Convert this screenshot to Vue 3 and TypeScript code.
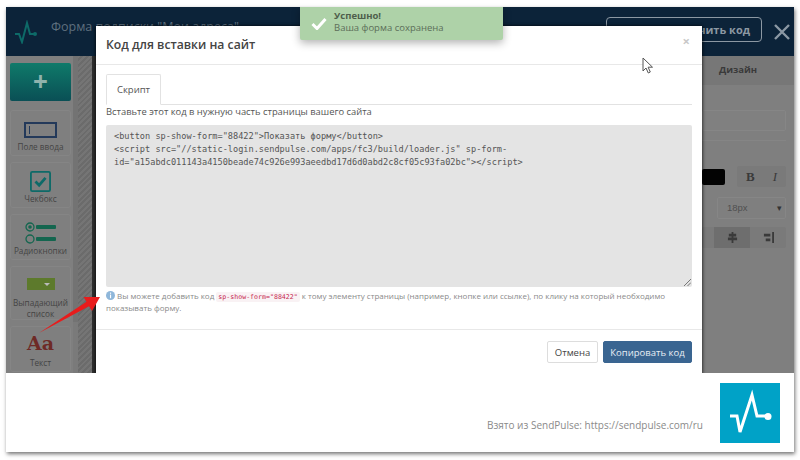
<script setup lang="ts">
const code = `<button sp-show-form="88422">Показать форму</button>
<script src="//static-login.sendpulse.com/apps/fc3/build/loader.js" sp-form-
id="a15abdc011143a4150beade74c926e993aeedbd17d6d0abd2c8cf05c93fa02bc"><\/script>`
const snippet = 'sp-show-form="88422"'
</script>

<template>
  <div class="page">
    <div class="frame">
      <div class="app">
        <header class="topbar">
          <svg class="bar-logo" width="24" height="24" viewBox="0 0 24 24" fill="none">
            <path d="M1 14h4l3 8 5-19 3 11h5" stroke="#0e6a68" stroke-width="2" />
            <circle cx="21" cy="14" r="2" fill="#0e6a68" />
          </svg>
          <span class="bar-title">Форма подписки "Мои адреса"</span>
          <span class="bar-spacer"></span>
          <span class="bar-btn">Получить код</span>
          <svg class="bar-x" width="16" height="16" viewBox="0 0 16 16">
            <path d="M1 1l14 14M15 1L1 15" stroke="#8c98a3" stroke-width="2.4" />
          </svg>
        </header>
        <div class="workspace">
          <aside class="sidebar">
            <div class="add">+</div>
            <div class="tool tool-a">
              <span class="input-ico"><i></i></span>
              <span>Поле ввода</span>
            </div>
            <div class="tool tool-a tight">
              <svg width="21" height="21" viewBox="0 0 23 23" fill="none">
                <rect x="1" y="1" width="21" height="21" rx="1.5" stroke="#0e6a68" stroke-width="2" />
                <path d="M6 11.5l4 4 7-8" stroke="#0e6a68" stroke-width="3" />
              </svg>
              <span>Чекбокс</span>
            </div>
            <div class="tool tool-a tight">
              <svg width="32" height="22" viewBox="0 0 32 22" fill="none">
                <circle cx="5" cy="5" r="4" stroke="#14664f" stroke-width="1.3" />
                <circle cx="5" cy="5" r="1.8" fill="#14664f" />
                <circle cx="5" cy="17" r="4" stroke="#14664f" stroke-width="1.3" />
                <rect x="11" y="3" width="20" height="4" rx="1" fill="#14664f" />
                <rect x="11" y="15" width="20" height="4" rx="1" fill="#14664f" />
              </svg>
              <span>Радиокнопки</span>
            </div>
            <div class="tool tool-b">
              <span class="select-ico"><i></i></span>
              <span class="two-line">Выпадающий<br />список</span>
            </div>
            <div class="tool tool-a">
              <span class="aa">Aa</span>
              <span>Текст</span>
            </div>
          </aside>
          <div class="scroll"><i></i></div>
          <div class="hatch"></div>
          <div class="dark"></div>
          <div class="center"></div>
          <section class="panel">
            <div class="panel-tab">Дизайн</div>
            <div class="panel-body">
              <div class="panel-input"></div>
              <div class="panel-line"></div>
              <div class="panel-row">
                <span class="swatch"></span>
                <span class="bi"><b>B</b><em>I</em></span>
              </div>
              <div class="panel-select"><span>18px</span><small>▾</small></div>
              <div class="panel-align">
                <span class="cell active">
                  <svg width="11" height="11" viewBox="0 0 12 12" fill="#3a3a3a">
                    <path d="M5 0h2v2h3v3H7v1h4v3H7v3H5V9H1V6h4V5H2V2h3z" />
                  </svg>
                </span>
                <span class="cell">
                  <svg width="11" height="11" viewBox="0 0 12 12" fill="#3a3a3a">
                    <path d="M10 0h2v12h-2zM1 2h7v3H1zM3 7h5v3H3z" />
                  </svg>
                </span>
              </div>
            </div>
          </section>
        </div>

        <div class="modal">
          <div class="modal-head">
            <h2>Код для вставки на сайт</h2>
            <span class="close">×</span>
          </div>
          <div class="modal-body">
            <div class="tabs"><span class="tab">Скрипт</span></div>
            <p class="lead">Вставьте этот код в нужную часть страницы вашего сайта</p>
            <div class="code-wrap">
              <pre class="code">{{ code }}</pre>
              <svg class="grip" width="8" height="8" viewBox="0 0 8 8">
                <path d="M1 8l7-7M4.5 8L8 4.5" stroke="#777" stroke-width="1" />
              </svg>
            </div>
            <p class="help">
              <svg class="info" width="9" height="9" viewBox="0 0 9 9">
                <circle cx="4.5" cy="4.5" r="4.5" fill="#8fb7da" />
                <rect x="4" y="1.6" width="1.1" height="1.2" fill="#fff" />
                <rect x="4" y="3.6" width="1.1" height="3.6" fill="#fff" />
              </svg>
              Вы можете добавить код <code>{{ snippet }}</code> к тому элементу страницы (например, кнопке или ссылке), по клику на который необходимо показывать форму.
            </p>
          </div>
          <div class="modal-foot">
            <button class="btn btn-cancel" type="button">Отмена</button>
            <button class="btn btn-copy" type="button">Копировать код</button>
          </div>
        </div>

        <div class="toast">
          <svg width="16" height="13" viewBox="0 0 16 13" fill="none">
            <path d="M1.5 7l4.5 4.5L14.5 2" stroke="#fff" stroke-width="3" />
          </svg>
          <div class="toast-text">
            <strong>Успешно!</strong>
            <span>Ваша форма сохранена</span>
          </div>
        </div>

        <svg class="arrow" width="64" height="40" viewBox="0 0 64 40">
          <path d="M0 38L47.500 6.800 44.500 2 61 2 53 16 50 11.200Z" fill="#e81c1c" />
        </svg>
        <svg class="cursor" width="12" height="17" viewBox="0 0 12 17">
          <path d="M1 1v13l3-3 2.300 5 2-1-2.200-4.800H10.500z" fill="#fff" stroke="#555" stroke-width="1" />
        </svg>
      </div>
      <footer class="credit">
        <span>Взято из SendPulse: https://sendpulse.com/ru</span>
        <div class="logo">
          <svg width="60" height="60" viewBox="0 0 60 60" fill="none">
            <path d="M10 33h7l3 16 12-37 5 21h11" stroke="#fff" stroke-width="3" />
            <circle cx="48" cy="33.500" r="3.500" fill="#fff" />
          </svg>
        </div>
      </footer>
    </div>
  </div>
</template>

<style scoped>
.page {
  width: 800px;
  height: 460px;
  box-sizing: border-box;
  padding: 7px 6px 8px;
  background: #fff;
  overflow: hidden;
  font-family: "Open Sans", "Noto Sans", sans-serif;
}
.frame {
  height: 445px;
  display: flex;
  flex-direction: column;
  background: #fff;
  box-shadow: 1px 2px 4px rgba(0, 0, 0, 0.55);
}
.app {
  position: relative;
  height: 366px;
  flex: none;
  overflow: hidden;
  background: #7f7f7f;
}
.topbar {
  height: 49px;
  display: flex;
  align-items: center;
  background: #0c2339;
  padding-right: 4px;
}
.bar-logo { margin-left: 8px; flex: none; }
.bar-title { margin: 0 0 10px 13px; font-size: 12.500px; color: #5e6f7e; }
.bar-spacer { flex: 1; }
.bar-btn {
  width: 156px;
  height: 25px;
  box-sizing: border-box;
  border: 1px solid #8c98a3;
  border-radius: 4px;
  margin: 0 12px 4px 0;
  padding-right: 11px;
  text-align: right;
  line-height: 23px;
  font-size: 11px;
  font-weight: 700;
  color: #8c98a3;
}
.workspace { display: flex; height: 317px; }
.sidebar {
  width: 67px;
  box-sizing: border-box;
  padding: 7px 2px 0 4px;
  display: flex;
  flex-direction: column;
  gap: 6px;
  flex: none;
}
.add {
  height: 38px;
  margin-bottom: 3px;
  border-radius: 2px;
  background: linear-gradient(#0f7a6a, #0a4f55);
  color: #8fb3ad;
  font-size: 26px;
  font-weight: 700;
  line-height: 36px;
  text-align: center;
}
.tool {
  flex: none;
  box-sizing: border-box;
  border: 1px solid #858585;
  border-radius: 3px;
  display: flex;
  flex-direction: column;
  align-items: center;
  font-size: 8.200px;
  color: #444;
  line-height: 11px;
}
.tool-a { height: 46px; justify-content: flex-end; gap: 3px; padding-bottom: 3px; }
.tool-a.tight { gap: 1px; }
.tool-b { height: 54px; padding-top: 11px; gap: 7px; }
.two-line { text-align: center; }
.input-ico {
  width: 33px;
  height: 16px;
  box-sizing: border-box;
  border: 2px solid #23395a;
  display: flex;
  align-items: center;
  padding-left: 3px;
}
.input-ico i { width: 1px; height: 8px; background: #23395a; }
.select-ico {
  width: 28px;
  height: 14px;
  background: #5d7a2c;
  display: flex;
  align-items: center;
  justify-content: flex-end;
  padding-right: 5px;
  box-sizing: border-box;
}
.select-ico i {
  border-left: 3px solid transparent;
  border-right: 3px solid transparent;
  border-top: 3px solid #bbb;
}
.aa {
  font-family: "DejaVu Serif", serif;
  font-weight: 700;
  font-size: 19px;
  line-height: 22px;
  color: #6e2a26;
}
.scroll { width: 5px; flex: none; background: #7a7a7a; }
.scroll i { display: block; height: 266px; background: #737373; }
.hatch {
  width: 14px;
  flex: none;
  background: repeating-linear-gradient(135deg, #757575 0 2px, #6b6b6b 2px 4px);
}
.dark { width: 4px; flex: none; background: #2f2f2f; }
.center { flex: 1; }
.panel {
  width: 92px;
  flex: none;
  background: #7f7f7f;
}
.panel-tab {
  height: 29px;
  background: #777;
  padding-right: 20px;
  font-size: 9.500px;
  font-weight: 700;
  line-height: 28px;
  color: #3a3a3a;
  text-align: center;
}
.panel-body { padding: 25px 8px 0 0; }
.panel-input { height: 21px; box-sizing: border-box; border: 1px solid #868686; border-radius: 2px; background: #808080; }
.panel-line { height: 1px; background: #858585; margin-top: 9px; }
.panel-row { display: flex; justify-content: flex-end; gap: 12px; margin-top: 25px; align-items: center; }
.swatch { width: 23px; height: 16px; border-radius: 2px; background: #030303; }
.bi {
  width: 49px;
  height: 21px;
  border-radius: 2px;
  background: #7a7a7a;
  display: flex;
  justify-content: space-around;
  align-items: center;
  font-family: "Liberation Serif", serif;
  font-size: 13px;
  color: #3a3a3a;
}
.panel-select {
  margin: 10px 0 0 15px;
  height: 22px;
  box-sizing: border-box;
  border: 1px solid #868686;
  border-radius: 2px;
  font-family: "Liberation Sans", sans-serif;
  font-size: 9.500px;
  line-height: 20px;
  color: #505050;
  display: flex;
  justify-content: space-between;
  padding: 0 3px 0 9px;
}
.panel-select small { font-size: 9px; color: #333; }
.panel-align {
  margin-top: 8px;
  height: 21px;
  background: #7a7a7a;
  border-radius: 2px;
  display: flex;
  justify-content: flex-end;
}
.cell {
  width: 36px;
  display: flex;
  align-items: center;
  justify-content: center;
}
.cell.active { background: #6e6e6e; }
.modal {
  position: absolute;
  left: 90px;
  top: 19px;
  width: 606px;
  height: 348px;
  background: #fff;
  display: flex;
  flex-direction: column;
  box-shadow: -1px 0 3px rgba(0, 0, 0, 0.5), 1px 0 3px rgba(0, 0, 0, 0.5);
}
.modal-head {
  flex: none;
  position: relative;
  border-bottom: 1px solid #e8e8e8;
  padding: 0 0 2px 10px;
  height: 36px;
  display: flex;
  align-items: center;
}
.modal-head h2 {
  margin: 0;
  font-size: 12.200px;
  font-weight: 600;
  color: #444;
}
.close {
  position: absolute;
  right: 12px;
  top: 8px;
  font-size: 13px;
  line-height: 14px;
  font-weight: 700;
  color: #c8c8c8;
}
.modal-body { flex: 1; padding: 9px 10px 0; min-height: 0; }
.tabs { height: 31px; box-sizing: border-box; border-bottom: 1px solid #e2e2e2; }
.tab {
  display: block;
  width: 55px;
  height: 31px;
  box-sizing: border-box;
  border: 1px solid #e2e2e2;
  border-bottom-color: #fff;
  border-radius: 2px 2px 0 0;
  text-align: center;
  font-size: 9.500px;
  line-height: 30px;
  color: #555;
}
.lead { margin: 0; height: 20px; font-size: 9.400px; line-height: 14px; color: #555; }
.code-wrap {
  position: relative;
  height: 162px;
  background: #e4e4e4;
  border-radius: 2px;
}
.code {
  margin: 0;
  padding: 5px 8px;
  font-family: "DejaVu Sans Mono", monospace;
  font-size: 8.600px;
  line-height: 13px;
  color: #555;
  white-space: pre;
}
.grip { position: absolute; right: 1px; bottom: 1px; }
.help { margin: 3px 0 0; font-size: 8px; line-height: 12px; color: #8a8a8a; }
.info { vertical-align: -1px; }
.help code {
  font-family: "DejaVu Sans Mono", monospace;
  font-size: 6.600px;
  line-height: 1;
  color: #c7254e;
  background: #f9f2f4;
  border-radius: 2px;
  padding: 1px 2px;
}
.modal-foot {
  height: 45px;
  box-sizing: border-box;
  flex: none;
  border-top: 1px solid #e8e8e8;
  display: flex;
  justify-content: flex-end;
  align-items: flex-start;
  gap: 5px;
  padding: 11px 10px 0;
}
.btn {
  height: 22px;
  padding: 0;
  border-radius: 2px;
  font-family: inherit;
  font-size: 9.500px;
}
.btn-cancel { width: 51px; border: 1px solid #ddd; background: #fff; color: #444; }
.btn-copy { width: 89px; border: 1px solid #3a6591; background: #3a6591; color: #e8eef4; }
.toast {
  position: absolute;
  left: 294px;
  top: 0;
  width: 203px;
  height: 33px;
  background: #aed2a8;
  border-radius: 0 0 2px 2px;
  box-shadow: 0 3px 8px rgba(0, 0, 0, 0.3);
  display: flex;
  align-items: center;
  gap: 7px;
  padding-left: 11px;
  box-sizing: border-box;
}
.toast-text {
  display: flex;
  flex-direction: column;
  padding-bottom: 3px;
  font-size: 9.500px;
  line-height: 12px;
  color: #5c6e59;
}
.toast-text strong { font-weight: 700; color: #4f5f4c; }
.arrow { position: absolute; left: 33px; top: 288px; }
.cursor { position: absolute; left: 636px; top: 50px; }
.credit {
  flex: 1;
  display: flex;
  justify-content: flex-end;
  gap: 17px;
  padding: 10px 14px 0 0;
  font-size: 10px;
  color: #8a8a8a;
}
.credit span { margin-top: 35px; }
.logo { width: 60px; height: 60px; background: #00a2c7; }
</style>
